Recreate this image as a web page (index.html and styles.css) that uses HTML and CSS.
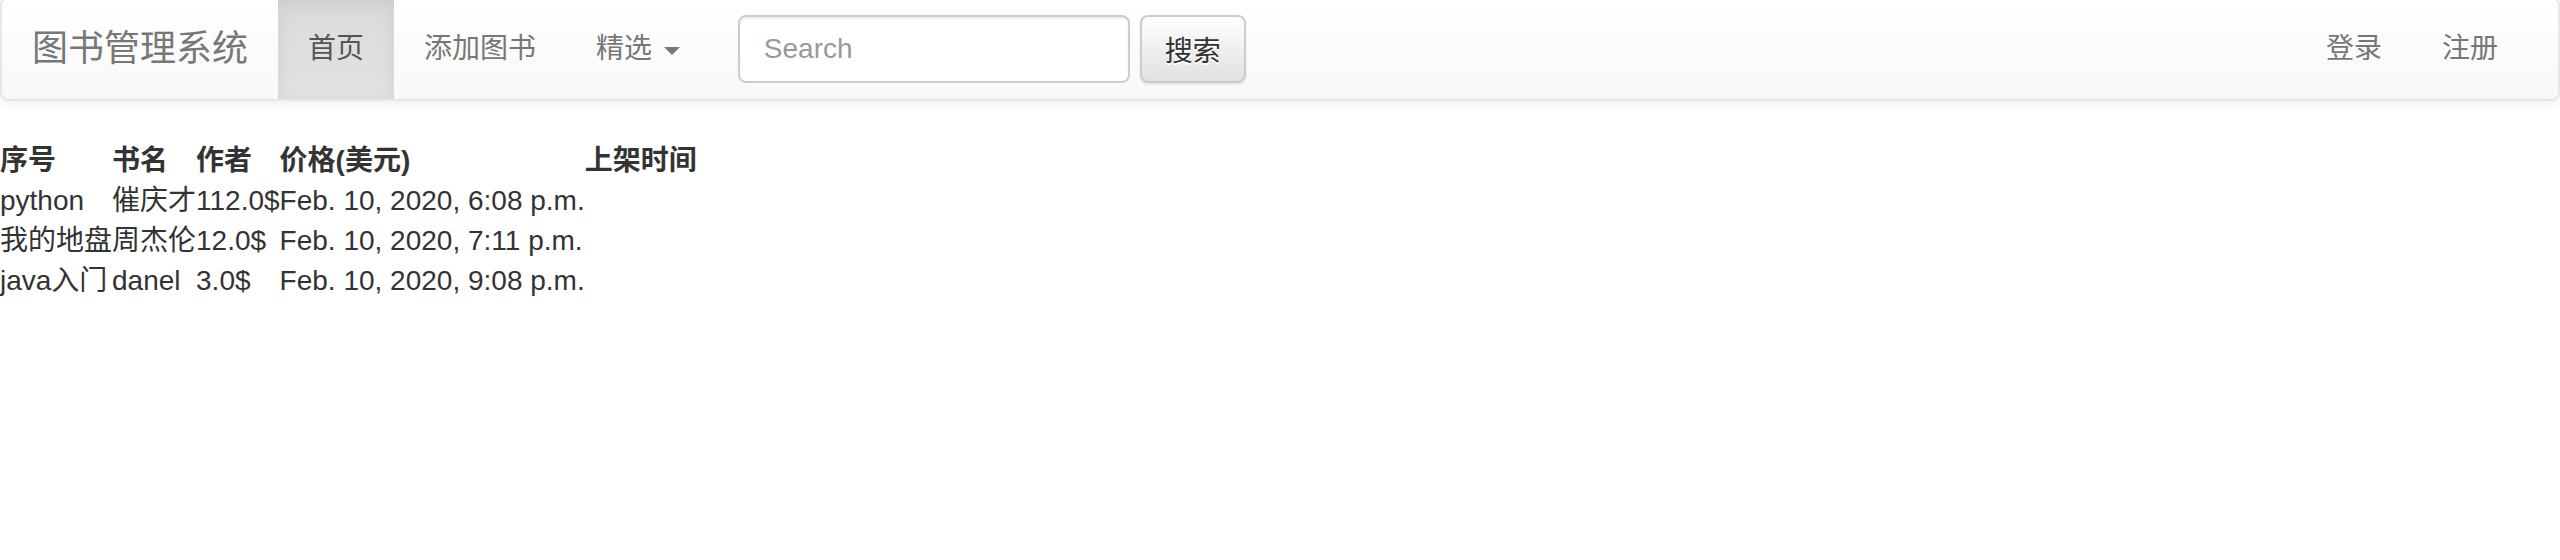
FILE: index.html
```html
<!DOCTYPE html>
<html lang="zh">
<head>
    <meta charset="UTF-8">
    <meta name="viewport" content="width=device-width, initial-scale=1.0">
    <title>图书管理系统</title>
    <link rel="stylesheet" href="styles.css">
</head>
<body>
    <nav class="navbar">
        <div class="navbar-inner">
            <a class="navbar-brand" href="#">图书管理系统</a>
            <ul class="nav">
                <li class="active"><a href="#">首页</a></li>
                <li><a href="#">添加图书</a></li>
                <li><a href="#">精选 <span class="caret"></span></a></li>
            </ul>
            <form class="search-form">
                <input type="text" class="search-input" placeholder="Search">
                <button type="submit" class="search-btn">搜索</button>
            </form>
            <ul class="nav nav-right">
                <li><a href="#">登录</a></li>
                <li><a href="#">注册</a></li>
            </ul>
        </div>
    </nav>

    <table class="book-table">
        <thead>
            <tr>
                <th>序号</th>
                <th>书名</th>
                <th>作者</th>
                <th>价格(美元)</th>
                <th>上架时间</th>
            </tr>
        </thead>
        <tbody>
            <tr>
                <td>python</td>
                <td>催庆才</td>
                <td>112.0$</td>
                <td>Feb. 10, 2020, 6:08 p.m.</td>
            </tr>
            <tr>
                <td>我的地盘</td>
                <td>周杰伦</td>
                <td>12.0$</td>
                <td>Feb. 10, 2020, 7:11 p.m.</td>
            </tr>
            <tr>
                <td>java入门</td>
                <td>danel</td>
                <td>3.0$</td>
                <td>Feb. 10, 2020, 9:08 p.m.</td>
            </tr>
        </tbody>
    </table>
</body>
</html>
```

FILE: styles.css
```css
html, body {
    margin: 0;
    padding: 0;
}
body {
    font-family: "Liberation Sans", "Noto Sans CJK SC", sans-serif;
    font-size: 28px;
    line-height: 40px;
    color: #333;
    background: #fff;
}
a {
    text-decoration: none;
}

.navbar {
    margin-top: -3px;
    margin-bottom: 40px;
    border: 2px solid #e7e7e7;
    border-radius: 8px;
    background-color: #f8f8f8;
    background-image: linear-gradient(to bottom, #fff 0, #f8f8f8 100%);
    box-shadow: inset 0 2px 0 rgba(255, 255, 255, .15), 0 2px 10px rgba(0, 0, 0, .075);
}
.navbar-inner {
    display: flex;
    align-items: flex-start;
    min-height: 100px;
    padding: 0 30px;
}
.navbar-brand {
    margin-left: -30px;
    padding: 30px;
    height: 40px;
    font-size: 36px;
    line-height: 40px;
    color: #777;
}
.nav {
    display: flex;
    margin: 0;
    padding: 0;
    list-style: none;
}
.nav li a {
    display: block;
    padding: 30px;
    line-height: 40px;
    color: #777;
}
.nav li.active a {
    color: #555;
    background-image: linear-gradient(to bottom, #dbdbdb 0, #e2e2e2 100%);
    box-shadow: inset 0 6px 18px rgba(0, 0, 0, .075);
}
.caret {
    display: inline-block;
    width: 0;
    height: 0;
    margin-left: 4px;
    vertical-align: middle;
    border-top: 8px solid;
    border-right: 8px solid transparent;
    border-left: 8px solid transparent;
}
.nav-right {
    margin-left: auto;
}

.search-form {
    display: flex;
    gap: 10px;
    margin: 16px 0;
    padding: 0 28px;
}
.search-input {
    box-sizing: border-box;
    width: 392px;
    height: 68px;
    padding: 12px 24px;
    font-family: "Liberation Sans", "Noto Sans CJK SC", sans-serif;
    font-size: 28px;
    color: #555;
    background: #fff;
    border: 2px solid #ccc;
    border-radius: 8px;
    box-shadow: inset 0 2px 2px rgba(0, 0, 0, .075);
    outline: none;
}
.search-input::placeholder {
    color: #999;
}
.search-btn {
    box-sizing: border-box;
    width: 106px;
    height: 68px;
    padding: 0;
    font-family: "Liberation Sans", "Noto Sans CJK SC", sans-serif;
    font-size: 28px;
    color: #333;
    text-shadow: 0 2px 0 #fff;
    background-image: linear-gradient(to bottom, #fff 0, #e0e0e0 100%);
    border: 2px solid #ccc;
    border-radius: 8px;
    box-shadow: inset 0 2px 0 rgba(255, 255, 255, .15), 0 2px 2px rgba(0, 0, 0, .075);
}

.book-table {
    border-collapse: collapse;
    border-spacing: 0;
}
.book-table th,
.book-table td {
    padding: 0;
    text-align: left;
    white-space: nowrap;
}
.book-table th {
    font-weight: bold;
}
```
